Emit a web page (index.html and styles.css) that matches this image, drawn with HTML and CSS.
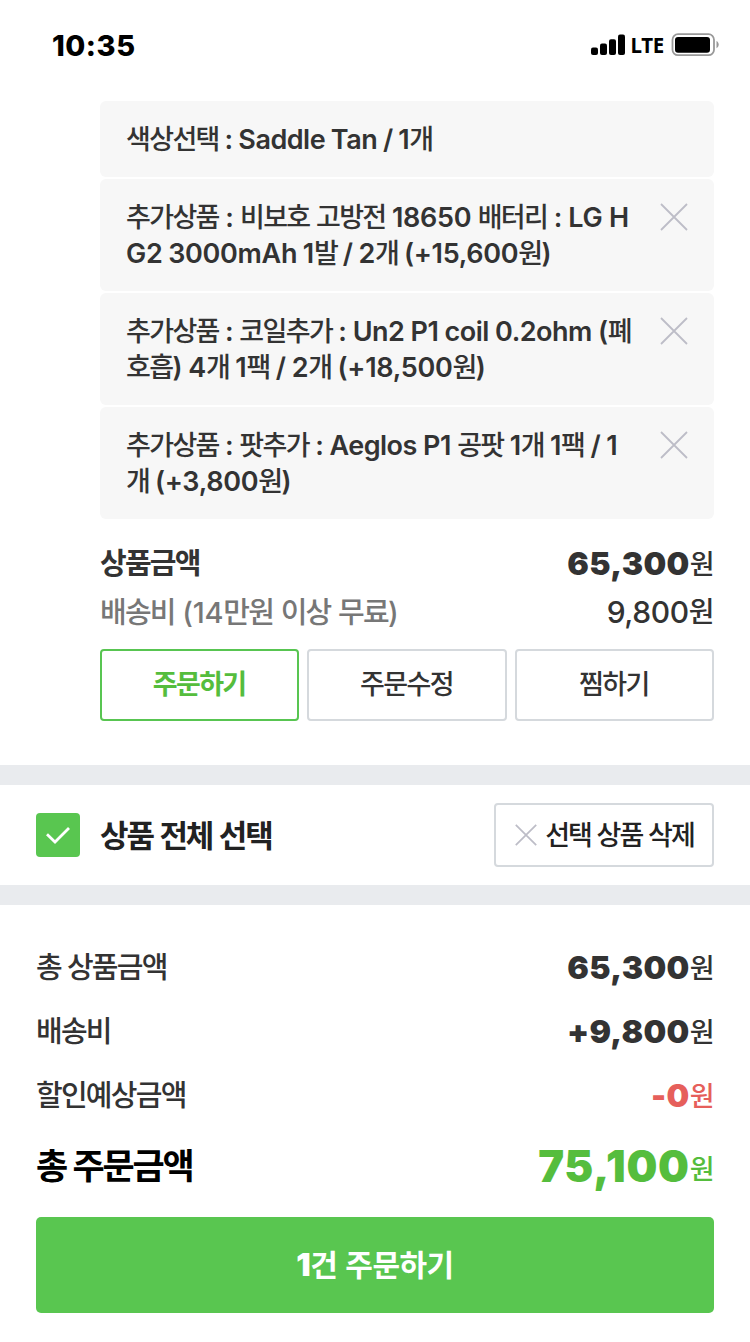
FILE: index.html
```html
<!DOCTYPE html>
<html lang="ko">
<head>
<meta charset="utf-8">
<title>장바구니</title>
<link rel="stylesheet" href="styles.css">
</head>
<body>
<header class="status">
  <span class="time">10:35</span>
  <span class="status-right">
    <svg class="signal" width="35" height="22" viewBox="0 0 35 22"><rect x="0" y="13.5" width="7" height="7.5" rx="2"/><rect x="9" y="9.5" width="7" height="11.5" rx="2"/><rect x="18" y="5.3" width="7" height="15.7" rx="2"/><rect x="27" y="0.5" width="7" height="20.5" rx="2"/></svg>
    <span class="lte">LTE</span>
    <svg class="battery" width="48" height="24" viewBox="0 0 48 24"><rect x="1.500" y="1.2" width="41.5" height="21" rx="5.5" fill="none" stroke="#999" stroke-width="1.8"/><rect x="4" y="4" width="35" height="15.8" rx="3"/><path d="M45.500 8v7.2c1.3-.6 2.2-2 2.2-3.600s-.9-3-2.200-3.600z" fill="#999"/></svg>
  </span>
</header>

<main>
  <section class="item">
    <ul class="options">
      <li class="option"><p><b>색상선택</b> : Saddle Tan / 1<b>개</b></p></li>
      <li class="option"><p><span class="loose"><b>추가상품</b> : <b>비보호</b> <b>고방전</b> 18650 <b>배터리</b> : LG H</span><br><span class="digits">G2 3000mAh 1<b>발</b> / 2<b>개</b> (+15,600<b>원</b>)</span></p><svg class="close" viewBox="0 0 28 28"><path d="M1 1l26 26M27 1L1 27"/></svg></li>
      <li class="option"><p><span class="medium"><b>추가상품</b> : <b>코일추가</b> : Un2 P1 coil 0.2ohm (<b>폐</b></span><br><span class="digits wide"><b>호흡</b>) 4<b>개</b> 1<b>팩</b> / 2<b>개</b> (+18,500<b>원</b>)</span></p><svg class="close" viewBox="0 0 28 28"><path d="M1 1l26 26M27 1L1 27"/></svg></li>
      <li class="option"><p><span class="medium"><b>추가상품</b> : <b>팟추가</b> : Aeglos P1 <b>공팟</b> 1<b>개</b> 1<b>팩</b> / 1</span><br><span class="digits"><b>개</b> (+3,800<b>원</b>)</span></p><svg class="close" viewBox="0 0 28 28"><path d="M1 1l26 26M27 1L1 27"/></svg></li>
    </ul>
    <div class="price-row"><span class="label strong"><b>상품금액</b></span><span class="amount"><em>65,300</em><b>원</b></span></div>
    <div class="price-row"><span class="label muted"><b>배송비</b> (14<b>만원</b> <b>이상</b> <b>무료</b>)</span><span class="amount light"><em>9,800</em><b>원</b></span></div>
    <div class="actions">
      <button class="btn primary">주문하기</button>
      <button class="btn">주문수정</button>
      <button class="btn">찜하기</button>
    </div>
  </section>

  <section class="select-all">
    <span class="checkbox"><svg width="24" height="18" viewBox="0 0 24 18"><path d="M1 8.300l8 7.700L23 2"/></svg></span>
    <span class="select-label">상품 전체 선택</span>
    <button class="delete"><svg class="close small" viewBox="0 0 28 28"><path d="M1 1l26 26M27 1L1 27"/></svg><span>선택 상품 삭제</span></button>
  </section>

  <section class="summary">
    <div class="sum-row"><span class="label"><b>총</b> <b>상품금액</b></span><span class="amount"><em>65,300</em><b>원</b></span></div>
    <div class="sum-row"><span class="label"><b>배송비</b></span><span class="amount"><em>+9,800</em><b>원</b></span></div>
    <div class="sum-row"><span class="label"><b>할인예상금액</b></span><span class="amount red"><em>-0</em><b>원</b></span></div>
    <div class="sum-row total"><span class="label"><b>총</b> <b>주문금액</b></span><span class="amount green"><em>75,100</em><b>원</b></span></div>
    <button class="order"><span>1</span>건 주문하기</button>
  </section>
</main>
</body>
</html>
```
FILE: styles.css
```css
* { box-sizing: border-box; }
body {
  margin: 0;
  background: #fff;
  color: #333;
  font-family: Inter, "Noto Sans CJK KR", sans-serif;
}
ul, p { margin: 0; padding: 0; list-style: none; }
button {
  margin: 0;
  padding: 0;
  background: #fff;
  font-family: "Noto Sans CJK KR", sans-serif;
}
b {
  font-family: "Noto Sans CJK KR", sans-serif;
  font-weight: 500;
  line-height: 0;
}
em { font-style: normal; line-height: 0; }

/* Status bar */
.status {
  display: flex;
  justify-content: space-between;
  height: 101px;
  padding: 27px 31px 0 52px;
  color: #000;
}
.time { font-size: 29px; font-weight: 800; line-height: 37px; letter-spacing: 0.5px; }
.status-right { display: flex; align-items: center; height: 36px; }
.lte { margin: 0 7px 0 5px; font: 700 20.5px/36px "Noto Sans", sans-serif; letter-spacing: -0.3px; }

/* Cart item */
.item { padding: 0 36px 44px 100px; }
.options { display: flex; flex-direction: column; gap: 2px; }
.option {
  display: flex;
  justify-content: space-between;
  padding: 21px 26px 19px;
  border-radius: 6px;
  background: #f7f7f7;
}
.option p {
  font-size: 27px;
  font-weight: 600;
  line-height: 36px;
  letter-spacing: -0.5px;
  word-spacing: -0.6px;
  white-space: nowrap;
}
.loose { letter-spacing: -0.3px; word-spacing: -0.1px; }
.medium { word-spacing: -0.1px; }
.digits { letter-spacing: -0.3px; word-spacing: -0.8px; }
.wide { word-spacing: -0.4px; }
.option b { font-size: 27px; letter-spacing: -1.640px; }
.close { width: 28px; height: 28px; margin-top: 3px; fill: none; stroke: #bdbdc7; stroke-width: 1.800; }
.price-row { display: flex; justify-content: space-between; height: 49px; line-height: 49px; white-space: nowrap; }
.price-row:first-of-type { margin-top: 20px; }
.label { font-size: 29px; font-weight: 500; letter-spacing: -0.25px; }
.label b { letter-spacing: -1.750px; }
.strong b { font-weight: 700; }
.muted { color: #777; }
.amount { padding-right: 1px; font-size: 32px; }
.amount em { font-weight: 900; letter-spacing: 0.3px; }
.amount b { font-size: 27px; letter-spacing: -1.500px; vertical-align: 1px; }
.light { font-size: 30px; }
.amount.light em { font-weight: 500; letter-spacing: -0.4px; }
.light b { font-size: 28px; }
.actions { display: grid; grid-template-columns: repeat(3, 1fr); gap: 8px; margin-top: 12px; }
.btn {
  height: 72px;
  padding: 0 1px 5px 0;
  border: 2px solid #d5d9dd;
  border-radius: 4px;
  color: #333;
  font-size: 27px;
  font-weight: 500;
  letter-spacing: -1.640px;
}
.primary { border-color: #58c551; color: #55bd3d; font-weight: 700; }

/* Select all */
.select-all {
  display: flex;
  align-items: center;
  height: 140px;
  padding: 0 36px;
  border: solid #e9ebee;
  border-width: 20px 0;
}
.checkbox { display: grid; place-items: center; width: 44px; height: 44px; border-radius: 4px; background: #59c650; }
.checkbox path { fill: none; stroke: #fff; stroke-width: 2.800; }
.select-label {
  flex: 1;
  margin-left: 20px;
  padding-bottom: 2px;
  color: #222;
  font: 700 31px/40px "Noto Sans CJK KR", sans-serif;
  letter-spacing: -2.100px;
}
.delete {
  display: flex;
  align-items: center;
  justify-content: center;
  width: 220px;
  height: 64px;
  border: 2px solid #d5d9dd;
  border-radius: 4px;
  color: #222;
  font-size: 27px;
  font-weight: 500;
  letter-spacing: -1.950px;
}
.delete span { padding-bottom: 3px; }
.small { width: 22px; height: 22px; margin: 0 8px 0 1px; stroke-width: 2.200; }

/* Totals */
.summary { padding: 31px 36px 29px; }
.sum-row { display: flex; justify-content: space-between; height: 64px; line-height: 64px; white-space: nowrap; }
.sum-row .label { word-spacing: -1.500px; }
.red { color: #e65f5b; }
.green { color: #55bd3d; }
.total { height: 89px; line-height: 77px; }
.total .label { color: #000; font-size: 35px; word-spacing: -2.500px; }
.total .label b { font-weight: 700; letter-spacing: -2.200px; }
.total .amount { font-size: 43.500px; }
.total .amount em { letter-spacing: 0.700px; }
.total .amount b { vertical-align: 3px; }
.order {
  width: 100%;
  height: 96px;
  padding-bottom: 4px;
  border: 0;
  border-radius: 5px;
  background: #59c650;
  color: #fff;
  font-size: 30px;
  font-weight: 700;
  letter-spacing: -0.5px;
}
.order span { font-family: Inter, sans-serif; font-weight: 900; font-size: 32px; line-height: 0; }
```
